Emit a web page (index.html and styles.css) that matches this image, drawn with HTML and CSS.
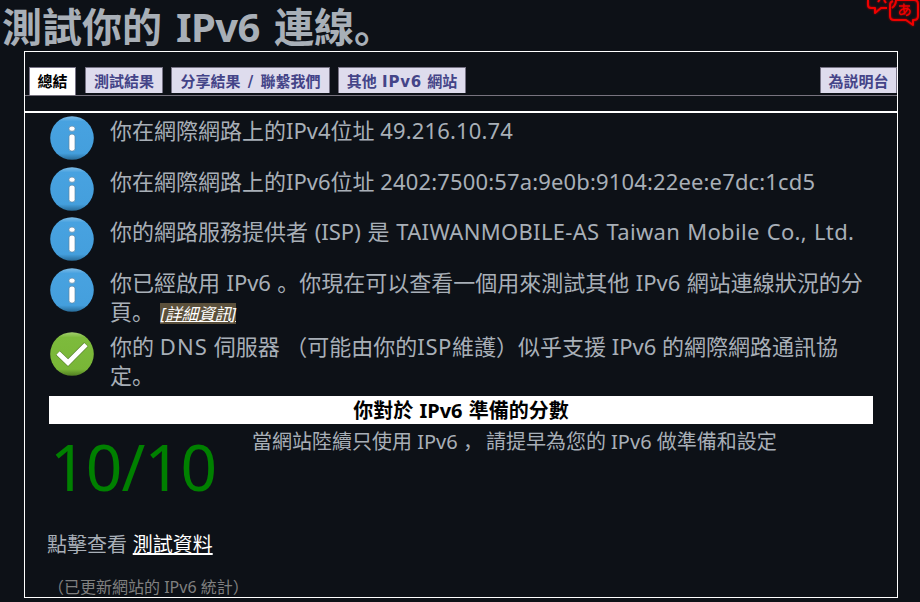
FILE: index.html
```html
<!DOCTYPE html>
<html lang="zh-Hans">
<head>
<meta charset="utf-8">
<title>測試你的 IPv6 連線。</title>
<link rel="stylesheet" href="styles.css">
</head>
<body>
<svg class="symbols" width="0" height="0" aria-hidden="true">
  <defs>
    <linearGradient id="blue" x1="0" y1="0" x2="0" y2="1"><stop offset="0" stop-color="#80bde8"/><stop offset=".12" stop-color="#48a2e0"/><stop offset=".85" stop-color="#449fdd"/><stop offset="1" stop-color="#286b98"/></linearGradient>
    <linearGradient id="green" x1="0" y1="0" x2="0" y2="1"><stop offset="0" stop-color="#a4cf70"/><stop offset=".12" stop-color="#7dbb3c"/><stop offset=".85" stop-color="#79b637"/><stop offset="1" stop-color="#507d22"/></linearGradient>
    <symbol id="info" viewBox="0 0 44 44"><circle cx="22" cy="22" r="21.8" fill="url(#blue)"/><ellipse cx="22" cy="12.7" rx="3.1" ry="2.6" fill="#fff" stroke="#5d86a5" stroke-width=".7"/><rect x="19" y="18.2" width="6" height="16.8" rx="2.5" fill="#fff" stroke="#5d86a5" stroke-width=".7"/></symbol>
    <symbol id="check" viewBox="0 0 44 44"><circle cx="22" cy="22" r="21.8" fill="url(#green)"/><path d="M7.8 20.8 18 30.6 36.2 12.4" fill="none" stroke="#527a29" stroke-width="5.8"/><path d="M8 21 18 30.6 36 12.6" fill="none" stroke="#fff" stroke-width="4.8"/></symbol>
  </defs>
</svg>
<svg class="translate" width="53" height="28" viewBox="0 0 53 28" fill="none" stroke="#ee0000" stroke-width="2" stroke-linejoin="round">
  <path d="M1 0v5q0 3 3 3h4v5l6-5h6M11 2l2-3M17 0l2 3M29 0q0 5-4 8"/>
  <path d="M28 0h19q4 0 4 4v12q0 4-4 4h-1v5l-7-5H27q-4 0-4-4V5q0-3 3-4"/>
  <path stroke-width="1.4" d="M32 6h11M37 3.5c-1 5 0 8 1 11M41 7.5c-1 4-4 7-7 7-3-1-1-6 5-6 6 0 5 6 0 7"/>
</svg>
<h1>測試你的 <span class="h-lat">IPv6</span> 連線。</h1>
<main class="panel">
  <nav class="tabs">
    <a class="tab active">總結</a>
    <a class="tab">測試結果</a>
    <a class="tab share">分享結果 / 聯繫我們</a>
    <a class="tab other">其他 <span class="tab-lat">IPv6</span> 網站</a>
    <a class="tab help">為説明台</a>
  </nav>
  <section class="content">
    <ul class="results">
      <li><svg class="icon"><use href="#info"/></svg><p>你在網際網路上的IPv4位址 <span class="ip4">49.216.10.74</span></p></li>
      <li><svg class="icon"><use href="#info"/></svg><p>你在網際網路上的IPv6位址 <span class="ip6">2402:7500:57a:9e0b:9104:22ee:e7dc:1cd5</span></p></li>
      <li><svg class="icon"><use href="#info"/></svg><p class="provider">你的網路服務提供者 (ISP) 是 <span class="name">TAIWANMOBILE-AS Taiwan Mobile Co., Ltd.</span></p></li>
      <li class="two"><svg class="icon"><use href="#info"/></svg><p class="enabled">你已經啟用 IPv6 。你現在可以查看一個用來測試其他 IPv6 網站連線狀況的分<br>頁。 <a class="more">[詳細資訊]</a></p></li>
      <li class="two"><svg class="icon"><use href="#check"/></svg><p>你的 <span class="dns">DNS</span> 伺服器 （可能由你的<span class="isp">ISP</span>維護）似乎支援 IPv6 的網際網路通訊協<br>定。</p></li>
    </ul>
    <h2>你對於 IPv6 準備的分數</h2>
    <div class="score-row">
      <div class="score">10/10</div>
      <p class="advice">當網站陸續只使用 IPv6 ，<span class="gap"></span>請提早為您的 IPv6 做準備和設定</p>
    </div>
    <p class="data">點擊查看 <a>測試資料</a></p>
    <p class="stats">（已更新網站的 IPv6 統計）</p>
  </section>
</main>
</body>
</html>
```

FILE: styles.css
```css
* { box-sizing: border-box; margin: 0; padding: 0; }
body {
  width: 920px;
  height: 602px;
  overflow: hidden;
  background: #0d1117;
  color: #a8afb7;
  font-family: "Noto Sans", "Noto Sans CJK SC", sans-serif;
}
.symbols { position: absolute; }
.translate { position: absolute; top: 0; right: 0; filter: drop-shadow(0 0 1px #b00000); }
h1 { height: 51px; padding-left: 2px; font-size: 40px; line-height: 53px; white-space: nowrap; word-spacing: 3.7px; }
.h-lat { letter-spacing: -.6px; }
.panel { width: 874px; height: 547px; margin-left: 24px; border: 1px solid #fff; }
.tabs {
  display: flex;
  align-items: flex-start;
  height: 44px;
  margin-bottom: 15px;
  padding: 15px 0 0 4px;
  border-bottom: 1px solid #77737f;
}
.tab {
  height: 26px;
  width: 78px;
  margin-right: 8px;
  border: 1px solid #777385;
  border-bottom: 0;
  background: #dedced;
  color: #444488;
  font: bold 15px/28px "DejaVu Sans", "Noto Sans CJK SC", sans-serif;
  text-align: center;
  white-space: nowrap;
}
.tab.active { width: 47px; height: 28px; margin-right: 9px; background: #fff; color: #000; }
.tab.share { width: 159px; word-spacing: 2px; }
.tab.other { width: 128px; }
.tab-lat { letter-spacing: .8px; }
.tab.help { width: 77px; margin: 0 0 0 auto; }
.content { border-top: 2px solid #fff; }
.results { list-style: none; padding: 3px 0 0 25px; }
.results li { display: flex; gap: 16px; height: 50.6px; }
.results .two { height: 64px; }
.icon { flex: none; width: 44px; height: 44px; }
.results p { font-size: 22px; line-height: 29.5px; white-space: nowrap; }
.ip4 { letter-spacing: .15px; }
.ip6 { letter-spacing: .15px; }
.provider { word-spacing: 1px; }
.name { letter-spacing: .32px; }
.enabled { word-spacing: .7px; }
.dns { letter-spacing: 1.1px; }
.isp { letter-spacing: .6px; }
.more {
  display: inline-block;
  height: 21px;
  background: #5b503b;
  color: #fff;
  font-size: 16.5px;
  line-height: 21px;
  font-style: italic;
  text-decoration: underline;
}
h2 {
  width: 824px;
  height: 28px;
  margin-left: 24px;
  background: #fff;
  color: #000;
  font-size: 20px;
  line-height: 30px;
  text-align: center;
  word-spacing: 1px;
}
.score-row { display: flex; height: 107px; padding-left: 25px; }
.score { width: 202px; color: #008000; font-size: 64px; line-height: 85px; letter-spacing: -.8px; white-space: nowrap; }
.advice { font-size: 20px; line-height: 35px; white-space: nowrap; }
.gap { display: inline-block; width: 3px; }
.data { padding-left: 22px; font-size: 20px; line-height: 27px; word-spacing: .5px; }
.data a { color: #fff; text-decoration: underline; }
.stats { padding: 17px 0 0 23px; color: #808080; font-size: 16px; line-height: 24px; }
```
